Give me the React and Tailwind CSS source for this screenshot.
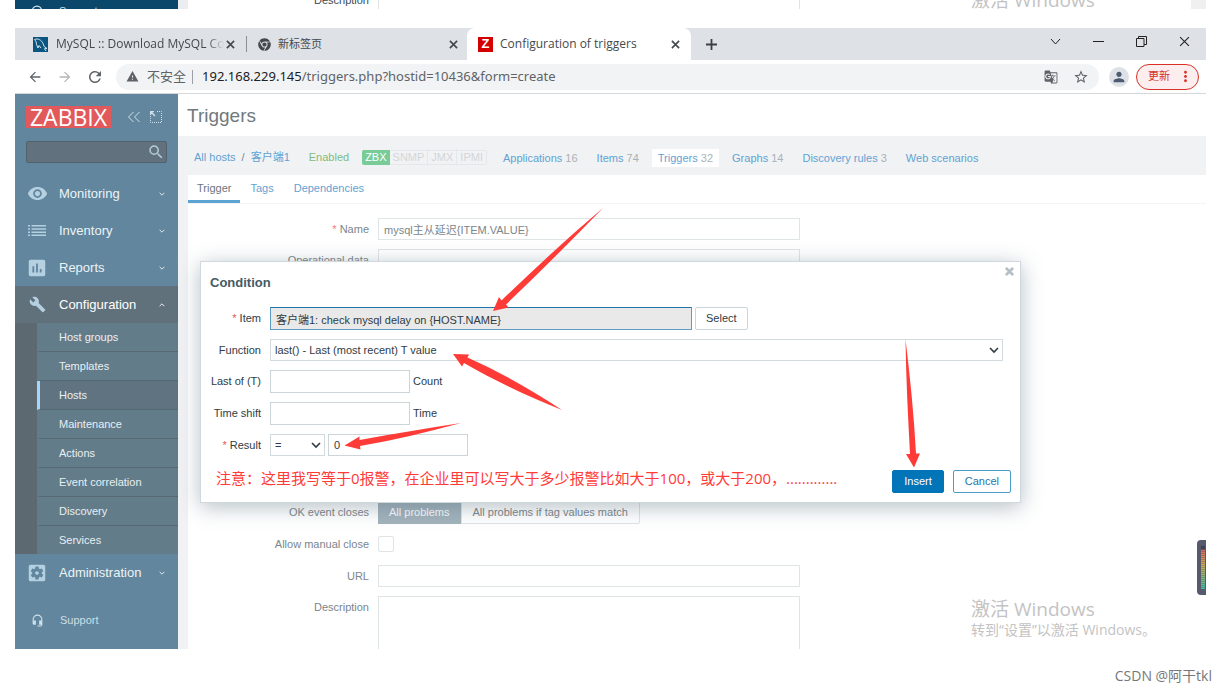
import React, { useState } from "react";
import {
  MdArrowBack,
  MdArrowForward,
  MdAssessment,
  MdBuild,
  MdGTranslate,
  MdHeadsetMic,
  MdMoreVert,
  MdPerson,
  MdRefresh,
  MdRemoveRedEye,
  MdSearch,
  MdSettingsApplications,
  MdStarBorder,
  MdWarning,
} from "react-icons/md";
import { FaChrome } from "react-icons/fa";

const inputStyle =
  "border border-[#dfe4e7] bg-white px-[5px] text-[11px] outline-none";
const dialogInput =
  "h-[23px] border border-[#ccd5d9] bg-white px-[5px] text-[11px] text-[#1f2c33] outline-none";

const subItems = [
  "Host groups",
  "Templates",
  "Hosts",
  "Maintenance",
  "Actions",
  "Event correlation",
  "Discovery",
  "Services",
];

const hostLinks = [
  { name: "Applications", count: 16 },
  { name: "Items", count: 74 },
  { name: "Triggers", count: 32 },
  { name: "Graphs", count: 14 },
  { name: "Discovery rules", count: 3 },
  { name: "Web scenarios" },
];

function ListIcon() {
  return (
    <svg width="18" height="12" viewBox="0 0 18 12" fill="currentColor">
      <path d="M0 0h2v1.500H0zM0 3.200h2v1.500H0zM0 6.400h2v1.500H0zM0 9.600h2v1.500H0zM3.500 0H18v1.500H3.500zM3.500 3.200H18v1.500H3.500zM3.500 6.400H18v1.500H3.500zM3.500 9.600H18v1.500H3.500z" />
    </svg>
  );
}

function MysqlIcon() {
  return (
    <svg width="15" height="15" viewBox="0 0 15 15" className="shrink-0">
      <rect width="15" height="15" fill="#0b5681" />
      <path
        d="M1.500 2.500C5 1 8.500 3 10 6.500l1.200 3 2.800 2-2.500.2L13 14M1.500 2.500C3 4 3.500 5.500 3.500 7.500L5 11l1-2.500 2 2.500"
        fill="none"
        stroke="#d5e5ee"
        strokeWidth="1"
      />
    </svg>
  );
}

function CloseIcon({ size = 9, width = 1.8 }) {
  return (
    <svg
      width={size}
      height={size}
      viewBox="0 0 10 10"
      stroke="currentColor"
      strokeWidth={width}
    >
      <path d="M1 1l8 8M9 1l-8 8" />
    </svg>
  );
}

function Chevron({ up, size = 6, width = 2 }) {
  return (
    <svg
      width={size}
      height={size}
      viewBox="0 0 10 10"
      fill="none"
      stroke="currentColor"
      strokeWidth={width}
    >
      <path d={up ? "M1 7l4-4 4 4" : "M1 3l4 4 4-4"} />
    </svg>
  );
}

function PreviousShot() {
  return (
    <div className="relative flex h-[9px] overflow-hidden">
      <div className="flex w-[163px] items-start bg-[#0b466b] pt-[5px] text-[11px] leading-3 text-[#d5e2ea]">
        <MdHeadsetMic size={14} className="ml-[15px] mr-[15px] shrink-0" />
        <span>Support</span>
      </div>
      <div className="w-[10px] bg-[#ebedf0]" />
      <div className="flex w-[181px] items-end justify-end text-[11px] leading-[15px] text-[#3c4a52]">
        <span className="pb-px">Description</span>
      </div>
      <div className="ml-[9px] w-[422px] border-x border-[#dfe4e7]" />
      <div className="ml-[171px] flex flex-1 items-end">
        <span className="whitespace-nowrap font-['Open_Sans','Noto_Sans_CJK_SC',sans-serif] text-[19px] leading-[18px] text-[#c3c3c3]">
          激活 Windows
        </span>
      </div>
      <div className="w-[15px] bg-[#f0f0f0]" />
    </div>
  );
}

function BrowserTabs() {
  return (
    <div className="flex h-8 bg-[#dee1e6] text-xs text-[#45494d]">
      <div className="flex w-[231px] items-center pl-[18px] pr-[11px]">
        <MysqlIcon />
        <span className="ml-2 w-[168px] overflow-hidden whitespace-nowrap mask-r-from-90% mask-r-to-100%">
          MySQL :: Download MySQL Community
        </span>
        <button aria-label="Close tab" className="ml-auto">
          <CloseIcon />
        </button>
      </div>
      <div className="my-2 w-px bg-[#8b8e92]" />
      <div className="flex w-[220px] items-center pl-[11px] pr-[9px]">
        <FaChrome size={13} className="shrink-0" />
        <span className="ml-[7px] text-[11px]">新标签页</span>
        <button aria-label="Close tab" className="ml-auto">
          <CloseIcon />
        </button>
      </div>
      <div className="flex w-[224px] items-center rounded-t-lg bg-white pl-[11px] pr-[11px]">
        <span className="flex size-[15px] items-center justify-center bg-[#d40000] font-['Liberation_Sans',sans-serif] text-[13px] font-bold text-white">
          Z
        </span>
        <span className="ml-[7px] whitespace-nowrap">
          Configuration of triggers
        </span>
        <button aria-label="Close tab" className="ml-auto">
          <CloseIcon />
        </button>
      </div>
      <button aria-label="New tab" className="ml-[15px]">
        <svg width="11" height="11" viewBox="0 0 11 11" fill="#3c4043">
          <path d="M4.600 0h1.800v11H4.600zM0 4.600h11v1.800H0z" />
        </svg>
      </button>
      <div className="ml-auto flex items-center gap-8 pb-[5px] pr-4 text-[#222]">
        <button aria-label="Search tabs">
          <svg width="11" height="11" viewBox="0 0 11 11" fill="none" stroke="currentColor">
            <path d="M1 3l4.500 5L10 3" />
          </svg>
        </button>
        <button aria-label="Minimize">
          <svg width="11" height="11" viewBox="0 0 11 11" stroke="currentColor">
            <path d="M0 5.500h11" />
          </svg>
        </button>
        <button aria-label="Restore">
          <svg width="11" height="11" viewBox="0 0 11 11" fill="none" stroke="currentColor">
            <path d="M.5 2.500h7.500v8H.5zM2.500 2.500v-2h8v8H8" />
          </svg>
        </button>
        <button aria-label="Close window">
          <CloseIcon size={11} width={1} />
        </button>
      </div>
    </div>
  );
}

function AddressBar() {
  return (
    <div className="flex h-[34px] items-center border-b border-[#d5d7da] bg-white pl-3 pr-[7px] text-[13px] text-[#5f6368]">
      <button aria-label="Back">
        <MdArrowBack size={16} />
      </button>
      <button aria-label="Forward" className="ml-[14px] text-[#b4b6b9]">
        <MdArrowForward size={16} />
      </button>
      <button aria-label="Reload" className="ml-[13px]">
        <MdRefresh size={18} />
      </button>
      <div className="ml-[12px] flex h-[26px] flex-1 items-center rounded-full bg-[#f1f3f4] px-[10px]">
        <MdWarning size={13} className="shrink-0" />
        <span className="ml-2 whitespace-nowrap">不安全</span>
        <div className="ml-[6px] h-[14px] w-px bg-[#9aa0a6]" />
        <span className="ml-[9px] flex-1 whitespace-nowrap font-['Noto_Sans',sans-serif]">
          <span className="text-[#202124]">192.168.229.145</span>
          /triggers.php?hostid=10436&amp;form=create
        </span>
        <MdGTranslate size={14} />
        <button aria-label="Bookmark" className="ml-[15px]">
          <MdStarBorder size={16} />
        </button>
      </div>
      <button
        aria-label="Profile"
        className="ml-[10px] flex size-5 items-center justify-center rounded-full bg-[#dee1e6] text-[#4c5b70]"
      >
        <MdPerson size={16} />
      </button>
      <button className="ml-[7px] flex h-[26px] w-[63px] items-center rounded-full border border-[#d93025] bg-[#fceeee] pl-[11px] text-[11px] text-[#d93025]">
        更新
        <MdMoreVert size={17} className="ml-[7px]" />
      </button>
    </div>
  );
}

function MenuItem({ icon, name, active }) {
  return (
    <a
      href="#"
      className={
        active
          ? "flex h-[37px] items-center bg-[#61717c] pl-[13px] pr-[13px] text-[13px] text-white"
          : "flex h-[37px] items-center pl-[13px] pr-[13px] text-[13px] text-[#edf3f7]"
      }
    >
      <span className="flex w-[18px] justify-center text-[#b5d0e0]">
        {icon}
      </span>
      <span className="ml-[13px]">{name}</span>
      <span className="ml-auto">
        <Chevron up={active} width={1.5} />
      </span>
    </a>
  );
}

function Sidebar() {
  return (
    <nav className="w-[163px] shrink-0 bg-[#61869d]">
      <div className="flex items-center pl-[11px] pt-3">
        <span className="flex h-[22px] w-[85px] items-center justify-center bg-[#e2595b] font-['Open_Sans',sans-serif] text-[23px] leading-[20px] text-white">
          ZABBIX
        </span>
        <button aria-label="Collapse" className="ml-4 text-[#cfe0ea]">
          <svg width="14" height="12" viewBox="0 0 14 12" fill="none" stroke="currentColor">
            <path d="M6.500 1L1.500 6l5 5M12.500 1l-5 5 5 5" />
          </svg>
        </button>
        <button aria-label="Kiosk mode" className="ml-[9px] text-[#cfe0ea]">
          <svg width="12" height="12" viewBox="0 0 12 12" fill="none" stroke="currentColor">
            <path d="M.5 5v6.500h11V.5H6" strokeDasharray="1 1" />
            <path d="M0 .5h4M.5 0v4M1 1l4 4" strokeWidth="1.400" />
          </svg>
        </button>
      </div>
      <div className="mx-[11px] mt-[13px] flex h-[22px] items-center rounded-xs border border-[#52626c] bg-[#61717d] pr-px">
        <input
          aria-label="Search"
          className="w-full min-w-0 bg-transparent px-2 text-[11px] text-white outline-none"
        />
        <MdSearch size={18} className="shrink-0 text-[#b5cbd8]" />
      </div>
      <div className="pt-3">
        <MenuItem icon={<MdRemoveRedEye size={21} className="shrink-0" />} name="Monitoring" />
        <MenuItem icon={<ListIcon />} name="Inventory" />
        <MenuItem icon={<MdAssessment size={22} className="shrink-0" />} name="Reports" />
        <MenuItem icon={<MdBuild size={17} />} name="Configuration" active />
      </div>
      <ul className="border-l-[22px] border-[#5d6970] bg-[#637c8a] text-[11px] text-[#e9eff2]">
        {subItems.map((item) => (
          <li
            key={item}
            className={
              item === "Hosts"
                ? "border-b border-l-[3px] border-b-[#566872] border-l-[#a5d5f7] bg-[#5f7380]"
                : "border-b border-l-[3px] border-b-[#566872] border-l-transparent last:border-b-0"
            }
          >
            <a href="#" className="flex h-7 items-center pl-[19px]">
              {item}
            </a>
          </li>
        ))}
      </ul>
      <MenuItem icon={<MdSettingsApplications size={22} className="shrink-0" />} name="Administration" />
      <a href="#" className="mt-[15px] flex h-[29px] items-center pl-4 text-[11px] text-[#cfdfe8]">
        <MdHeadsetMic size={13} />
        <span className="ml-4">Support</span>
      </a>
    </nav>
  );
}

function HostNavigation() {
  return (
    <div className="flex h-[39px] items-center gap-[6px] whitespace-nowrap bg-[#f1f2f4] pl-4 pt-1 text-[11px] text-[#5fa3d3]">
      <a href="#">All hosts</a>
      <span className="text-[#7b868c]">/</span>
      <a href="#">客户端1</a>
      <span className="ml-[13px] text-[#7dbd80]">Enabled</span>
      <div className="ml-[7px] flex h-[15px] items-center rounded-xs border border-[#e5e8ea] text-[#d3d7d9]">
        <span className="-my-px -ml-px rounded-l-xs bg-[#79cb97] px-[3px] leading-[15px] text-white">
          ZBX
        </span>
        <span className="px-[3px]">SNMP</span>
        <span className="border-l border-[#e5e8ea] px-[3px]">JMX</span>
        <span className="border-l border-[#e5e8ea] px-[3px]">IPMI</span>
      </div>
      <div className="ml-1 flex gap-[7px]">
        {hostLinks.map((link) => (
          <a
            key={link.name}
            href="#"
            className={
              link.name === "Triggers"
                ? "bg-white px-[6px] leading-[18px]"
                : "px-[6px] leading-[18px]"
            }
          >
            {link.name}
            {link.count && (
              <span className="text-[#a8b1b6]"> {link.count}</span>
            )}
          </a>
        ))}
      </div>
    </div>
  );
}

function FormRow({ id, label, required, children }) {
  return (
    <div className="flex gap-[9px]">
      <label
        htmlFor={id}
        className="w-[181px] shrink-0 whitespace-nowrap text-right leading-[22px]"
      >
        {required && <span className="text-[#f07a7a]">* </span>}
        {label}
      </label>
      {children}
    </div>
  );
}

function TriggerForm() {
  const [name, setName] = useState("mysql主从延迟{ITEM.VALUE}");

  return (
    <form className="flex-1 bg-white text-[11px] text-[#7b868c]">
      <div className="flex h-[29px] border-b border-[#f3f4f5] text-[#5fa3d3]">
        <button type="button" className="border-b-3 border-[#5ba4d2] px-[9px] pt-px text-[#6b767c]">
          Trigger
        </button>
        <button type="button" className="border-b-3 border-transparent px-[10px] pt-px">
          Tags
        </button>
        <button type="button" className="border-b-3 border-transparent px-[10px] pt-px">
          Dependencies
        </button>
      </div>
      <div className="flex flex-col gap-[9px] pt-[14px]">
        <FormRow id="name" label="Name" required>
          <input
            id="name"
            className={inputStyle + " h-[22px] w-[422px]"}
            value={name}
            onChange={(e) => setName(e.target.value)}
          />
        </FormRow>
        <FormRow id="opdata" label="Operational data">
          <input id="opdata" className={inputStyle + " h-[22px] w-[422px]"} />
        </FormRow>
      </div>
      <div className="flex flex-col gap-[9px] pt-[199px]">
        <FormRow label="PROBLEM event generation mode" />
        <FormRow label="OK event closes">
          <div className="flex h-[23px]">
            <button type="button" className="bg-[#a3b3bc] px-[11px] text-white">
              All problems
            </button>
            <button
              type="button"
              className="rounded-r-xs border border-[#dfe4e7] px-[11px]"
            >
              All problems if tag values match
            </button>
          </div>
        </FormRow>
        <FormRow id="manual" label="Allow manual close">
          <input
            id="manual"
            type="checkbox"
            className="mb-1 mt-[3px] size-4 appearance-none rounded-xs border border-[#dfe4e7] bg-white"
          />
        </FormRow>
        <FormRow id="url" label="URL">
          <input id="url" className={inputStyle + " h-[22px] w-[422px]"} />
        </FormRow>
        <FormRow id="description" label="Description">
          <textarea
            id="description"
            className={
              inputStyle + " h-[53px] w-[422px] resize-none border-b-0"
            }
          />
        </FormRow>
      </div>
    </form>
  );
}

function DialogRow({ id, label, required, children }) {
  return (
    <div className="flex items-center">
      <label
        htmlFor={id}
        className="mr-[9px] w-[51px] shrink-0 whitespace-nowrap text-right"
      >
        {required && <span className="text-[#e45959]">* </span>}
        {label}
      </label>
      {children}
    </div>
  );
}

function ConditionDialog() {
  const [value, setValue] = useState("0");

  return (
    <div
      role="dialog"
      aria-label="Condition"
      className="absolute inset-x-[185px] top-[167px] border border-[#cfd8dc] bg-white pb-[9px] pl-[9px] pr-[9px] pt-3 text-[11px] text-[#2f3c44] shadow-[0_4px_20px_rgba(70,95,110,0.4)]"
    >
      <button
        aria-label="Close"
        className="absolute right-[6px] top-[5px] text-[#b4c0c6]"
      >
        <CloseIcon size={9} width={3} />
      </button>
      <h4 className="text-[13px] font-bold leading-[18px] text-[#465a65]">
        Condition
      </h4>
      <div className="mt-[15px] flex flex-col gap-[9px]">
        <DialogRow id="item" label="Item" required>
          <input
            id="item"
            readOnly
            value="客户端1: check mysql delay on {HOST.NAME}"
            className="h-[23px] w-[422px] border border-[#5f9cc4] border-t-[#1f74ad] bg-[#e9e9e9] px-[5px] outline-none"
          />
          <button className="ml-[3px] h-[23px] rounded-xs border border-[#ccd5d9] px-[10px]">
            Select
          </button>
        </DialogRow>
        <DialogRow id="function" label="Function">
          <div className="relative mr-2 flex-1">
            <select
              id="function"
              className="block h-[22px] w-full appearance-none border border-[#d3dade] bg-white px-1 outline-none"
            >
              <option>last() - Last (most recent) T value</option>
            </select>
            <span className="pointer-events-none absolute right-1 top-[6px]">
              <Chevron size={10} width={1.6} />
            </span>
          </div>
        </DialogRow>
        <DialogRow id="last" label="Last of (T)">
          <input id="last" className={dialogInput + " w-[140px]"} />
          <span className="ml-[3px]">Count</span>
        </DialogRow>
        <DialogRow id="shift" label="Time shift">
          <input id="shift" className={dialogInput + " w-[140px]"} />
          <span className="ml-[3px]">Time</span>
        </DialogRow>
        <DialogRow id="operator" label="Result" required>
          <div className="relative w-[55px]">
            <select
              id="operator"
              className="block h-[22px] w-full appearance-none border border-[#d3dade] bg-white px-1 outline-none"
            >
              <option>=</option>
            </select>
            <span className="pointer-events-none absolute right-1 top-[6px]">
              <Chevron size={10} width={1.6} />
            </span>
          </div>
          <input
            aria-label="Result value"
            className="ml-[3px] h-[22px] w-[140px] border border-[#ccd5d9] px-[5px] outline-none"
            value={value}
            onChange={(e) => setValue(e.target.value)}
          />
        </DialogRow>
      </div>
      <div className="mt-[14px] flex h-[23px] items-center">
        <p className="flex-1 whitespace-nowrap pb-[6px] pl-[6px] font-['Open_Sans','Noto_Sans_CJK_SC',sans-serif] text-[15px] text-[#ff3b38]">
          注意：这里我写等于0报警，在企业里可以写大于多少报警比如大于100，或大于200，.............
        </p>
        <button className="h-[23px] rounded-xs border border-[#0275b8] bg-[#0275b8] px-[11px] text-white">
          Insert
        </button>
        <button className="ml-[9px] h-[23px] rounded-xs border border-[#4c9ccb] px-[11px] text-[#1f74ad]">
          Cancel
        </button>
      </div>
    </div>
  );
}

// red pointers drawn over the form
function Arrows() {
  return (
    <svg
      className="pointer-events-none absolute left-0 top-0"
      width="1191"
      height="555"
      viewBox="15 94 1191 555"
      fill="#ff3b38"
    >
      <path d="M493 311l6-14 2.500 3.500C535 268 570 236 603 208 572 240 540 272 506 304.500l2.500 3z" />
      <path d="M453 354l16 .5-1.500 3C500 372 532 390 562 410 530 397 497 382 464 363l-2 3.500z" />
      <path d="M344.500 445.500l15-9v3.500C393 434 427 428 461 423 428 432 394 440 360 446l.5 3.500z" />
      <path d="M914 467.500l-8-13.500h4C908 416 906 378 905.500 339 910 377 914 415 916 453.500h4z" />
    </svg>
  );
}

function App() {
  return (
    <div className="bg-white pb-1 font-['Liberation_Sans','Noto_Sans_CJK_SC',sans-serif]">
      <div className="pl-[15px] pr-[21px]">
        <PreviousShot />
        <div className="mt-[19px] font-['Open_Sans','Noto_Sans_CJK_SC',sans-serif]">
          <BrowserTabs />
          <AddressBar />
        </div>
        <div className="relative flex">
          <Sidebar />
          <main className="flex min-w-0 flex-1 flex-col">
            <h1 className="flex h-[42px] items-center bg-white pl-[9px] pt-[3px] text-[19px] text-[#71797e]">
              Triggers
            </h1>
            <HostNavigation />
            <div className="flex flex-1 bg-[#f1f2f4] pl-[10px]">
              <TriggerForm />
            </div>
          </main>
          <div className="absolute bottom-[9px] right-[50px] whitespace-nowrap font-['Open_Sans','Noto_Sans_CJK_SC',sans-serif] text-[#c3c3c3]">
            <p className="text-[19px] leading-[22px]">激活 Windows</p>
            <p className="text-sm leading-5">转到“设置”以激活 Windows。</p>
          </div>
          <ConditionDialog />
          <Arrows />
          {/* volume meter */}
          <svg
            className="absolute bottom-[54px] right-0"
            width="9"
            height="55"
            viewBox="0 0 9 55"
          >
            <defs>
              <linearGradient id="meter" x1="0" y1="0" x2="0" y2="1">
                <stop offset="0" stopColor="#e0605a" />
                <stop offset="0.400" stopColor="#c9b04e" />
                <stop offset="1" stopColor="#3fbf9f" />
              </linearGradient>
            </defs>
            <path d="M9 0H4a4 4 0 0 0-4 4v47a4 4 0 0 0 4 4h5z" fill="#565a6c" />
            <path d="M4 6h4v3H4z" fill="#3f4252" />
            <path d="M4 10h4v39H4z" fill="url(#meter)" />
            <path d="M6 11v38" stroke="#565a6c" strokeWidth="4" strokeDasharray="1 1" opacity="0.400" />
          </svg>
        </div>
      </div>
      <p className="pr-[15px] pt-[17px] text-right font-['Open_Sans','Noto_Sans_CJK_SC',sans-serif] text-sm text-[#777]">
        CSDN @阿干tkl
      </p>
    </div>
  );
}

export default App;
